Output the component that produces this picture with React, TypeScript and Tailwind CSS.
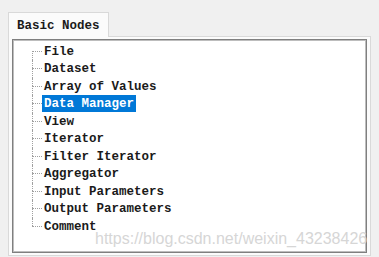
const nodes = [
  "File",
  "Dataset",
  "Array of Values",
  "Data Manager",
  "View",
  "Iterator",
  "Filter Iterator",
  "Aggregator",
  "Input Parameters",
  "Output Parameters",
  "Comment",
];

function TreeRow({ label, first, last, selected }: { label: string; first: boolean; last: boolean; selected: boolean }) {
  return (
    <div className="flex h-[17.5px] items-stretch">
      {/* dotted connector: vertical half above, vertical half below + horizontal stub */}
      <div className="flex w-[10px] flex-col">
        <div className={"flex-1 " + (first ? "" : "border-l border-dotted border-[#a0a0a0]")} />
        <div className={"flex-1 border-t border-dotted border-[#a0a0a0] " + (last ? "" : "border-l")} />
      </div>
      <div className="flex items-center">
        <span
          className={
            "px-[2px] pt-[1px] leading-[16px] whitespace-pre " +
            (selected ? "bg-[#0078d7] text-white" : "text-[#1a1a1a]")
          }
        >
          {label}
        </span>
      </div>
    </div>
  );
}

export default function App() {
  return (
    <div className="relative h-[257px] w-[379px] overflow-hidden bg-[#f0f0f0] pl-[8px] pt-[12px] font-['Liberation_Mono',monospace] text-[12.5px] font-bold">
      <div className="relative z-10 -mb-px flex h-[25px] w-[101px] items-center border border-b-0 border-[#d9d9d9] bg-[#fbfbfb] pl-[8px] pt-[3px] text-[#1a1a1a]">
        Basic Nodes
      </div>
      <div className="h-[220px] w-[363px] border border-[#d9d9d9] bg-[#fbfbfb] px-[3px] pb-[2px] pt-[2px]">
        <div className="h-full border border-[#7f7f7f] bg-white pl-[19px] pt-[2.5px] shadow-[inset_1px_1px_0_#bdbdbd,inset_-1px_-1px_0_#bdbdbd]">
          {nodes.map((n, i) => (
            <TreeRow key={n} label={n} first={i === 0} last={i === nodes.length - 1} selected={n === "Data Manager"} />
          ))}
        </div>
      </div>
      <div className="absolute left-[95px] top-[229px] font-['Liberation_Sans',sans-serif] text-[16px] font-normal leading-[20px] text-[#d6d6d6]">
        https://blog.csdn.net/weixin_43238426
      </div>
    </div>
  );
}
